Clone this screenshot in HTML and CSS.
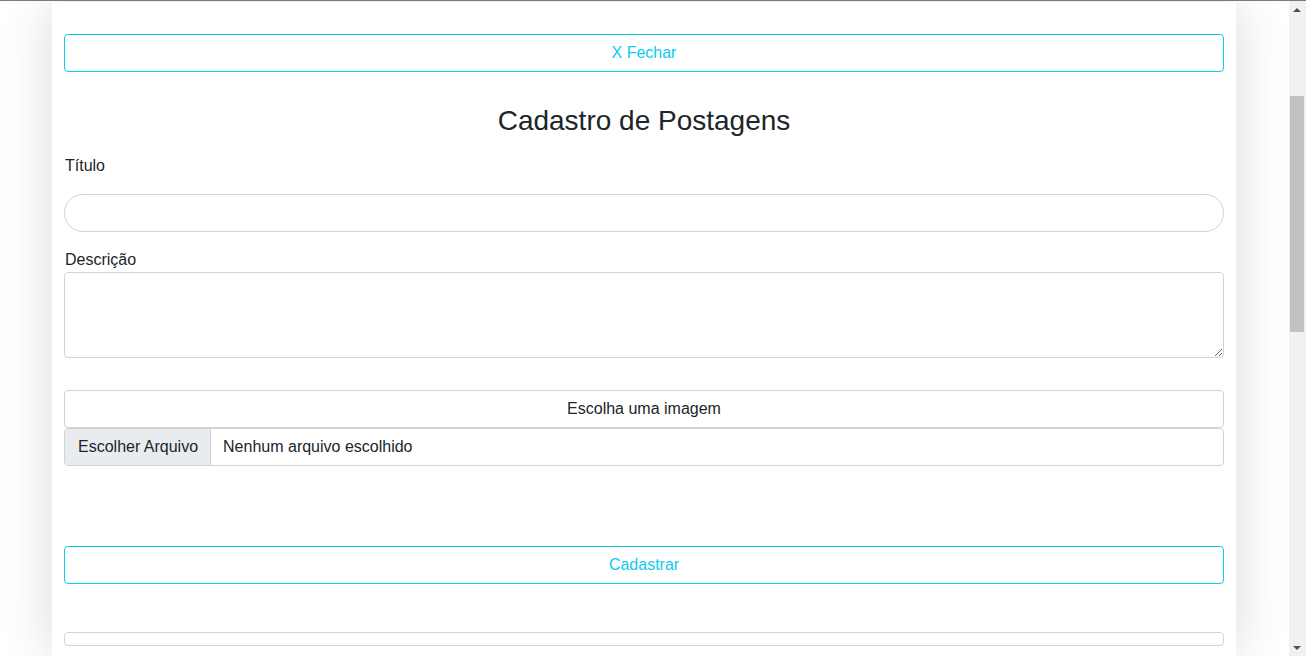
FILE: index.html
```html
<!DOCTYPE html>
<html lang="pt-BR">
<head>
<meta charset="utf-8">
<title>Cadastro de Postagens</title>
<link rel="stylesheet" href="styles.css">
</head>
<body>
<div class="topline"></div>
<div class="page">
  <main class="modal">
    <button class="btn-outline" type="button">X Fechar</button>
    <h3 class="title">Cadastro de Postagens</h3>
    <form class="form">
      <label class="label label-titulo">Título</label>
      <input class="input-pill" type="text">
      <label class="label label-desc">Descrição</label>
      <textarea class="textarea"></textarea>
      <div class="image-box">Escolha uma imagem</div>
      <div class="file-row">
        <span class="file-btn">Escolher Arquivo</span>
        <span class="file-name">Nenhum arquivo escolhido</span>
      </div>
      <button class="btn-outline btn-submit" type="button">Cadastrar</button>
      <div class="empty-box"></div>
    </form>
  </main>
</div>
<div class="scrollbar">
  <div class="arrow-up"></div>
  <div class="thumb"></div>
  <div class="arrow-down"></div>
</div>
</body>
</html>
```

FILE: styles.css
```css
* { box-sizing: border-box; }

html, body {
  margin: 0;
  padding: 0;
  height: 100%;
  overflow: hidden;
  background: #ffffff;
}

body {
  font-family: "Liberation Sans", Arial, sans-serif;
  font-size: 16px;
  line-height: 24px;
  color: #212529;
}

.topline {
  height: 1px;
  background: #717c89;
  position: relative;
  z-index: 2;
}

.page {
  padding-left: 52px;
  padding-top: 1px;
}

.modal {
  width: 1184px;
  height: 654px;
  overflow: hidden;
  background: #ffffff;
  box-shadow: 0 0 50px rgba(0, 0, 0, 0.15);
  padding: 32px 12px 0 12px;
}

.btn-outline {
  display: block;
  width: 100%;
  height: 38px;
  margin: 0;
  padding: 0;
  background: #ffffff;
  border: 1px solid #0dcaf0;
  border-radius: 4px;
  color: #0dcaf0;
  font-family: "Liberation Sans", Arial, sans-serif;
  font-size: 16px;
  line-height: 24px;
  text-align: center;
}

.title {
  margin: 32px 0 0 0;
  font-size: 28px;
  font-weight: 400;
  line-height: 33.6px;
  text-align: center;
  color: #212529;
}

.form {
  display: flex;
  flex-direction: column;
  margin: 0;
}

.label {
  display: block;
  padding-left: 1px;
  line-height: 24px;
}

.label-titulo { margin-top: 16px; }
.label-desc { margin-top: 16px; }

.input-pill {
  display: block;
  width: 100%;
  height: 38px;
  margin-top: 16.4px;
  border: 1px solid #ced4da;
  border-radius: 19px;
  background: #ffffff;
  padding: 0 16px;
  font-family: inherit;
  font-size: 16px;
}

.textarea {
  display: block;
  width: 100%;
  height: 86px;
  margin-top: 0;
  border: 1px solid #ced4da;
  border-radius: 4px;
  background: #ffffff;
  font-family: inherit;
  font-size: 16px;
  padding: 6px 12px;
}

.image-box {
  margin-top: 32px;
  height: 38px;
  border: 1px solid #ced4da;
  border-radius: 4px;
  display: flex;
  align-items: center;
  justify-content: center;
  color: #212529;
}

.file-row {
  height: 38px;
  border: 1px solid #ced4da;
  border-radius: 4px;
  display: flex;
  align-items: stretch;
  overflow: hidden;
}

.file-btn {
  display: flex;
  align-items: center;
  flex-shrink: 0;
  white-space: nowrap;
  padding: 0 12px 0 13px;
  background: #e9ecef;
  border-right: 1px solid #ced4da;
}

.file-name {
  display: flex;
  align-items: center;
  white-space: nowrap;
  padding-left: 12px;
}

.btn-submit {
  margin-top: 80px;
}

.empty-box {
  margin-top: 48px;
  height: 14px;
  border: 1px solid #ced4da;
  border-radius: 4px;
}

.scrollbar {
  position: fixed;
  top: 1px;
  right: 0;
  width: 17px;
  height: 655px;
  background: #f1f1f1;
}

.thumb {
  position: absolute;
  top: 95px;
  left: 1px;
  width: 14px;
  height: 236px;
  background: #c1c1c1;
}

.arrow-up {
  position: absolute;
  top: 7px;
  left: 4px;
  width: 0;
  height: 0;
  border-left: 4px solid transparent;
  border-right: 4px solid transparent;
  border-bottom: 4px solid #505050;
}

.arrow-down {
  position: absolute;
  bottom: 6px;
  left: 4px;
  width: 0;
  height: 0;
  border-left: 4px solid transparent;
  border-right: 4px solid transparent;
  border-top: 4px solid #505050;
}
```
